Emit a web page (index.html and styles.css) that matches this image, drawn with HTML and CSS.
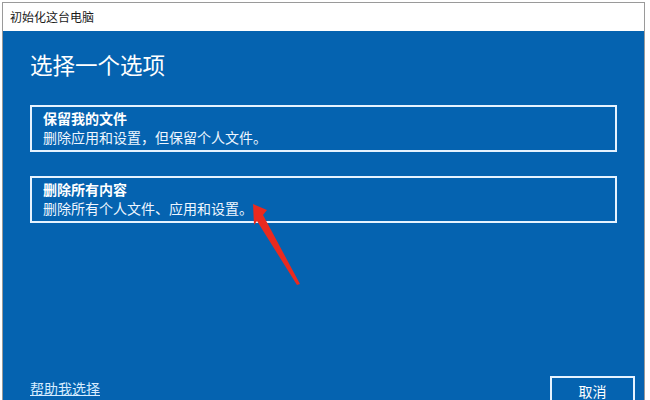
FILE: index.html
```html
<!DOCTYPE html>
<html lang="zh-CN">
<head>
<meta charset="utf-8">
<link rel="stylesheet" href="styles.css">
</head>
<body>
<div class="window">
  <div class="titlebar">初始化这台电脑</div>
  <div class="content">
    <h1 class="heading">选择一个选项</h1>
    <div class="option">
      <div class="opt-title">保留我的文件</div>
      <div class="opt-desc">删除应用和设置，但保留个人文件。</div>
    </div>
    <div class="option option-2">
      <div class="opt-title">删除所有内容</div>
      <div class="opt-desc">删除所有个人文件、应用和设置。</div>
    </div>
    <div class="footer">
      <a class="help">帮助我选择</a>
      <div class="cancel">取消</div>
    </div>
  </div>
</div>
<svg class="arrow" width="650" height="400" viewBox="0 0 650 400">
  <polygon points="253,204 267,210 263,215 300,284 297,285 257,221 254,225" fill="#ea2a1f"/>
</svg>
</body>
</html>
```
FILE: styles.css
```css
html, body {
  margin: 0;
  padding: 0;
  width: 650px;
  height: 400px;
  overflow: hidden;
  background: #ffffff;
  font-family: "Noto Sans CJK SC", "Noto Sans", sans-serif;
}
.window {
  margin: 2px 0 0 2px;
  width: 643px;
  height: 398px;
  border: 1px solid #9a9a9a;
  border-bottom: none;
  display: flex;
  flex-direction: column;
  box-sizing: border-box;
  overflow: hidden;
}
.titlebar {
  height: 28px;
  line-height: 28px;
  padding-left: 7px;
  font-size: 12px;
  color: #1a1a1a;
  background: #ffffff;
}
.content {
  flex: 1;
  background: #0563b0;
  padding: 20px 27px 0 27px;
  color: #ffffff;
  overflow: hidden;
}
.heading {
  margin: 0 0 28px 0;
  font-size: 22.5px;
  line-height: 26px;
  font-weight: normal;
  color: #ffffff;
}
.option {
  border: 2px solid #e6f3ff;
  padding: 2px 12px 3px 11px;
  height: 38px;
}
.option-2 {
  margin-top: 24px;
}
.opt-title {
  font-size: 14px;
  line-height: 19px;
  font-weight: bold;
}
.opt-desc {
  font-size: 14px;
  line-height: 19px;
  color: #eef6ff;
}
.footer {
  margin-top: 153px;
  margin-right: -18px;
  display: flex;
  justify-content: space-between;
  align-items: flex-start;
}
.help {
  margin-top: 3px;
  font-size: 14px;
  line-height: 19px;
  color: #d6ecff;
  text-decoration: underline;
}
.cancel {
  width: 81px;
  height: 30px;
  border: 2px solid #e6f3ff;
  text-align: center;
  font-size: 14px;
  line-height: 26px;
  color: #ffffff;
}
.arrow {
  position: absolute;
  left: 0;
  top: 0;
  pointer-events: none;
}
```
